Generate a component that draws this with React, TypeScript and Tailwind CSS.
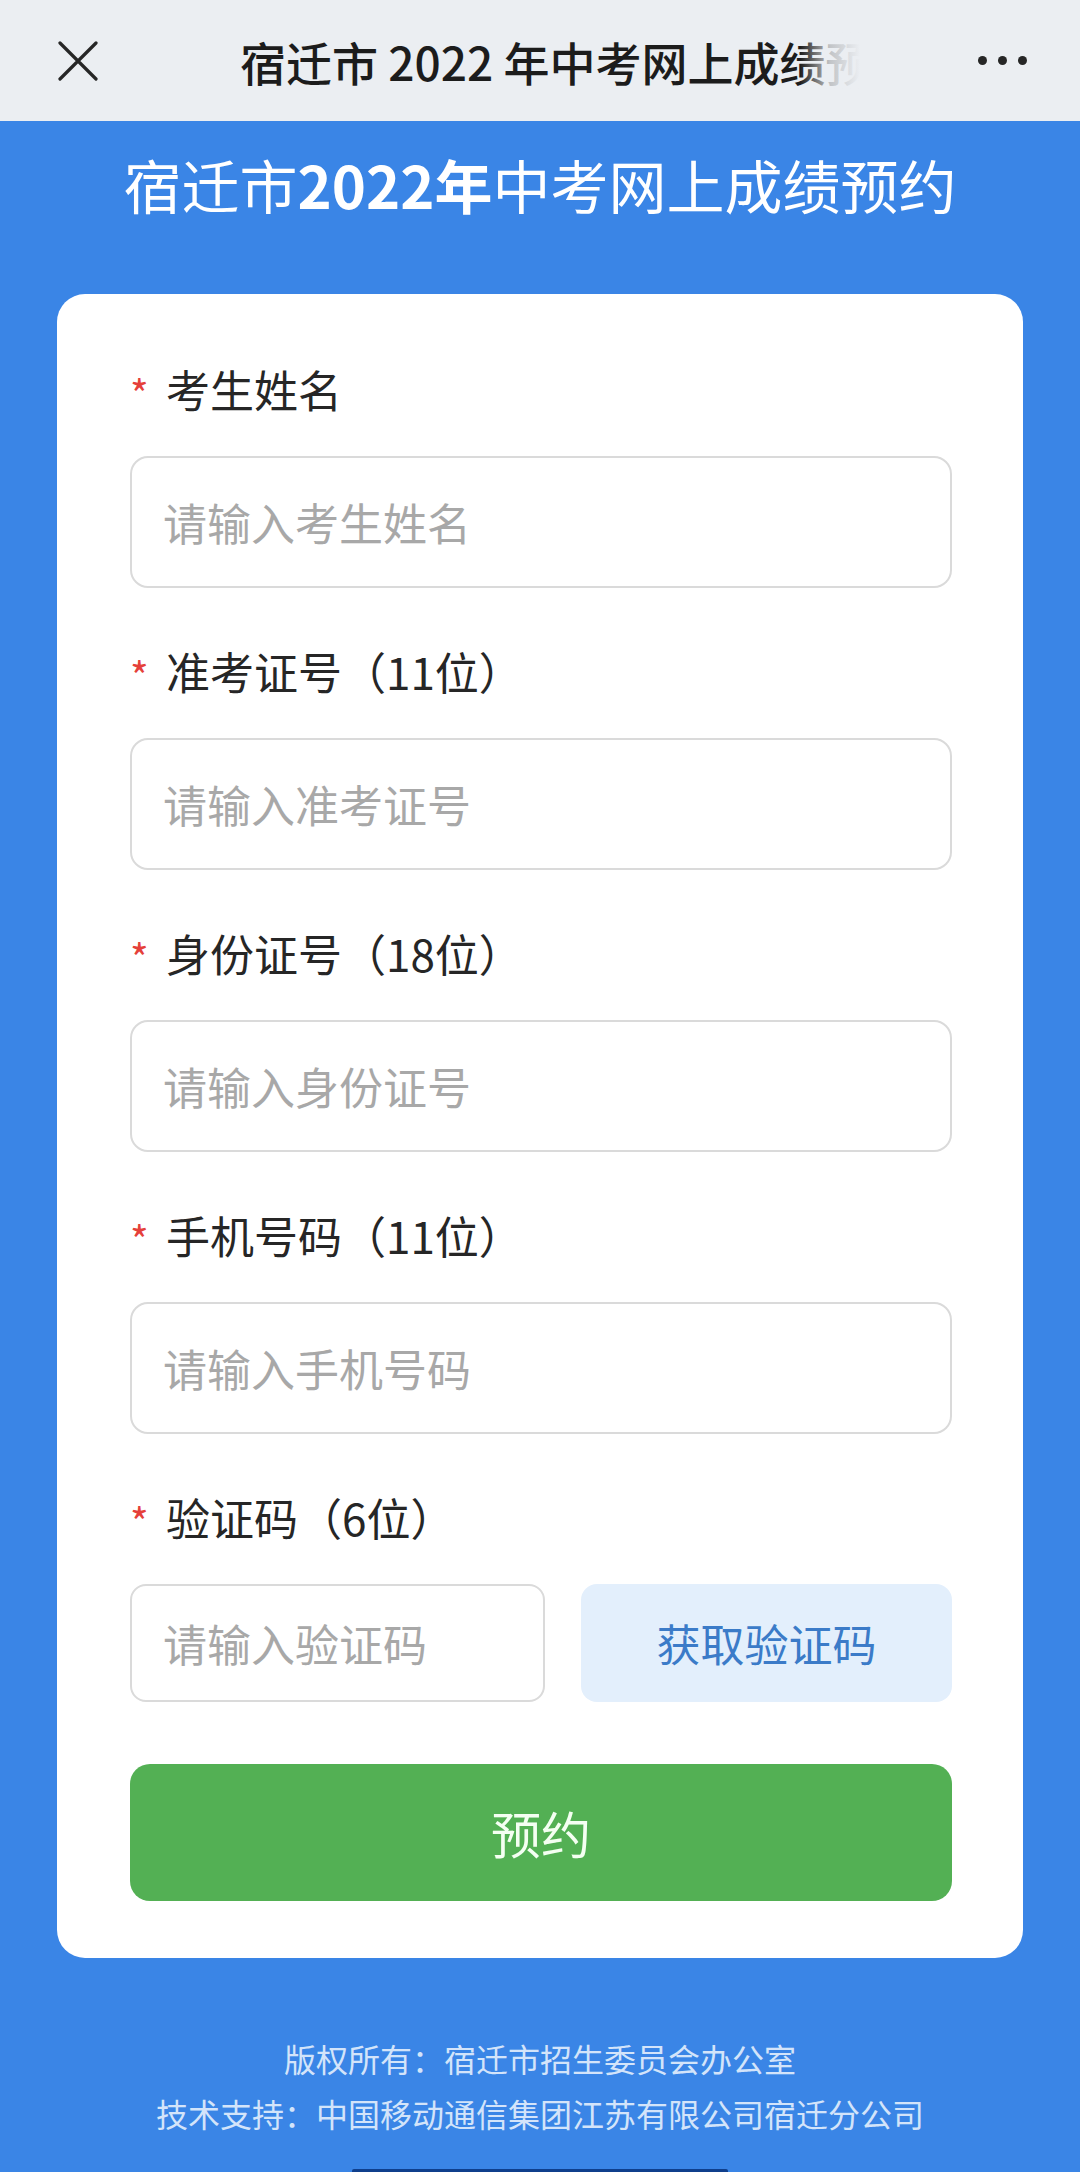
import React from "react";

const FONT = "font-['PingFang_SC','Noto_Sans_CJK_SC',sans-serif]";

function Label({ children }: { children: React.ReactNode }) {
  return (
    <div className="flex items-center h-[56px] text-[44px] leading-[56px] text-[#262626]">
      <span className="w-[36px] text-[40px] text-[#e5403a] translate-y-[4px]">*</span>
      <span>{children}</span>
    </div>
  );
}

function Field({ label, placeholder }: { label: React.ReactNode; placeholder: string }) {
  return (
    <div className="flex flex-col">
      <Label>{label}</Label>
      <input
        className="mt-[39px] h-[132px] w-full rounded-[18px] border-2 border-[#dadada] bg-white pl-[31px] text-[44px] text-[#333] outline-none placeholder:text-[#a8a8a8]"
        placeholder={placeholder}
      />
    </div>
  );
}

export default function App() {
  return (
    <div className={`${FONT} w-[1080px] min-h-[2172px] flex flex-col bg-[#3a85e6]`}>
      {/* Top nav */}
      <div className="h-[121px] flex items-center bg-[#ebeef2]">
        <div className="w-[240px] pl-[58px] flex items-center">
          <svg width="40" height="40" viewBox="0 0 40 40" fill="none">
            <path d="M2 2L38 38M38 2L2 38" stroke="#262626" strokeWidth="3.2" strokeLinecap="round" />
          </svg>
        </div>
        <div className="relative w-[620px] overflow-hidden whitespace-nowrap text-[46px] font-medium text-[#1c1c1c] leading-[60px]">
          宿迁市 2022 年中考网上成绩预约
          <div className="absolute right-0 top-0 h-full w-[60px] bg-gradient-to-r from-[#ebeef2]/0 via-[#ebeef2]/80 to-[#ebeef2]" />
        </div>
        <div className="flex-1 flex justify-end items-center gap-[11px] pr-[53px]">
          <span className="w-[9px] h-[9px] rounded-full bg-[#262626]" />
          <span className="w-[9px] h-[9px] rounded-full bg-[#262626]" />
          <span className="w-[9px] h-[9px] rounded-full bg-[#262626]" />
        </div>
      </div>

      {/* Page title */}
      <div className="pt-[23px] h-[80px] box-content text-center text-[58px] leading-[80px] text-white">
        宿迁市<span className="font-bold">2022年</span>中考网上成绩预约
      </div>

      {/* Card */}
      <div className="mt-[70px] mx-[57px] rounded-[28px] bg-white pt-[67px] pb-[57px] pl-[73px] pr-[71px] flex flex-col gap-[55px]">
        <Field label="考生姓名" placeholder="请输入考生姓名" />
        <Field label="准考证号（11位）" placeholder="请输入准考证号" />
        <Field label="身份证号（18位）" placeholder="请输入身份证号" />
        <Field label="手机号码（11位）" placeholder="请输入手机号码" />
        <div className="flex flex-col">
          <Label>验证码（6位）</Label>
          <div className="mt-[39px] flex gap-[36px]">
            <input
              className="h-[118px] w-[415px] rounded-[16px] border-2 border-[#dadada] bg-white pl-[31px] text-[44px] text-[#333] outline-none placeholder:text-[#a8a8a8]"
              placeholder="请输入验证码"
            />
            <button className="h-[118px] flex-1 rounded-[16px] bg-[#e3effc] text-[44px] text-[#3b7bc8]">
              获取验证码
            </button>
          </div>
          <button className="mt-[62px] h-[137px] w-full rounded-[20px] bg-[#53b054] text-[50px] text-[#f4fff2]">
            预约
          </button>
        </div>
      </div>

      {/* Footer */}
      <div className="mt-[73px] flex flex-col items-center text-[32px] leading-[55px] text-[#d3e4fa]">
        <div>版权所有：宿迁市招生委员会办公室</div>
        <div>技术支持：中国移动通信集团江苏有限公司宿迁分公司</div>
      </div>

      <div className="flex-1" />
      <div className="flex justify-center">
        <div className="w-[376px] h-[3px] rounded-t-[2px] bg-[#0f3f8c]" />
      </div>
    </div>
  );
}
